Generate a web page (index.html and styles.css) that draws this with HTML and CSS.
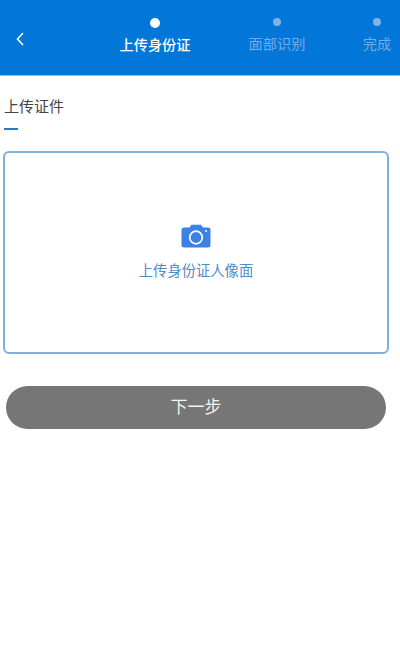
FILE: index.html
```html
<!DOCTYPE html>
<html lang="zh-CN">
<head>
    <meta charset="UTF-8">
    <meta name="viewport" content="width=device-width, initial-scale=1.0">
    <title>上传身份证</title>
    <link rel="stylesheet" href="styles.css">
</head>
<body>
    <div class="header">
        <div class="back">
            <svg width="10" height="16" viewBox="0 0 10 16"><path d="M8 2L2.5 8L8 14" fill="none" stroke="#fff" stroke-width="1.6"/></svg>
        </div>
        <div class="step step-active step-first">
            <span class="dot"></span>
            <span class="step-name">上传身份证</span>
        </div>
        <div class="step step-second">
            <span class="dot"></span>
            <span class="step-name">面部识别</span>
        </div>
        <div class="step step-third">
            <span class="dot"></span>
            <span class="step-name">完成</span>
        </div>
    </div>

    <div class="content">
        <h2 class="title">上传证件</h2>
        <div class="title-line"></div>

        <div class="upload-box">
            <svg class="camera" width="30" height="24" viewBox="0 0 30 24">
                <path d="M3 3.5H8.5L10.5 0.8H20L22 3.5H27Q29.5 3.5 29.5 6V21Q29.5 23.5 27 23.5H3Q0.5 23.5 0.5 21V6Q0.5 3.5 3 3.5Z" fill="#3b82e6"/>
                <circle cx="15" cy="13.5" r="6.3" fill="none" stroke="#fff" stroke-width="1.7"/>
                <circle cx="25" cy="7" r="1" fill="#fff"/>
            </svg>
            <span class="upload-text">上传身份证人像面</span>
        </div>

        <button class="next-button">下一步</button>
    </div>
</body>
</html>
```

FILE: styles.css
```css
body {
    margin: 0;
    background-color: #fff;
    font-family: "Noto Sans CJK SC", "Noto Sans", sans-serif;
}

.header {
    height: 75px;
    background-color: #0277d9;
    border-bottom: 1px solid #8fc4ee;
    display: flex;
    box-sizing: content-box;
}

.back {
    width: 119px;
    padding: 28px 0 0 15px;
    box-sizing: border-box;
}

.step {
    display: flex;
    flex-direction: column;
    align-items: center;
    color: #74ade8;
    font-size: 14.2px;
    line-height: 20px;
}

.step-first {
    width: 72px;
    color: #fff;
}

.step-active .step-name {
    font-weight: 500;
}

.step-second {
    width: 58px;
    margin-left: 57px;
}

.step-third {
    width: 30px;
    margin-left: 56px;
}

.dot {
    width: 8px;
    height: 8px;
    margin-top: 18px;
    margin-bottom: 7px;
    border-radius: 50%;
    background-color: #7eb2ea;
}

.step-active .dot {
    width: 10px;
    height: 10px;
    background-color: #fff;
    margin-bottom: 6px;
}

.content {
    padding: 19px 0 0 4px;
}

.title {
    margin: 0;
    font-size: 15px;
    line-height: 22px;
    font-weight: 400;
    color: #444;
}

.title-line {
    width: 14px;
    height: 2px;
    margin-top: 11px;
    background-color: #1d7fd0;
}

.upload-box {
    width: 386px;
    height: 203px;
    margin: 21px 0 0 -1px;
    box-sizing: border-box;
    border: 2px solid #7fb0de;
    border-radius: 6px;
    display: flex;
    flex-direction: column;
    align-items: center;
    padding-top: 71px;
}

.upload-text {
    margin-top: 12px;
    font-size: 14.3px;
    line-height: 20px;
    color: #4f8cc9;
}

.next-button {
    display: block;
    width: 380px;
    height: 43px;
    margin: 32px 0 0 2px;
    padding: 0 0 4px;
    border: none;
    border-radius: 22px;
    background-color: #767676;
    color: #f2f2f2;
    font-family: inherit;
    font-size: 17px;
}
```
